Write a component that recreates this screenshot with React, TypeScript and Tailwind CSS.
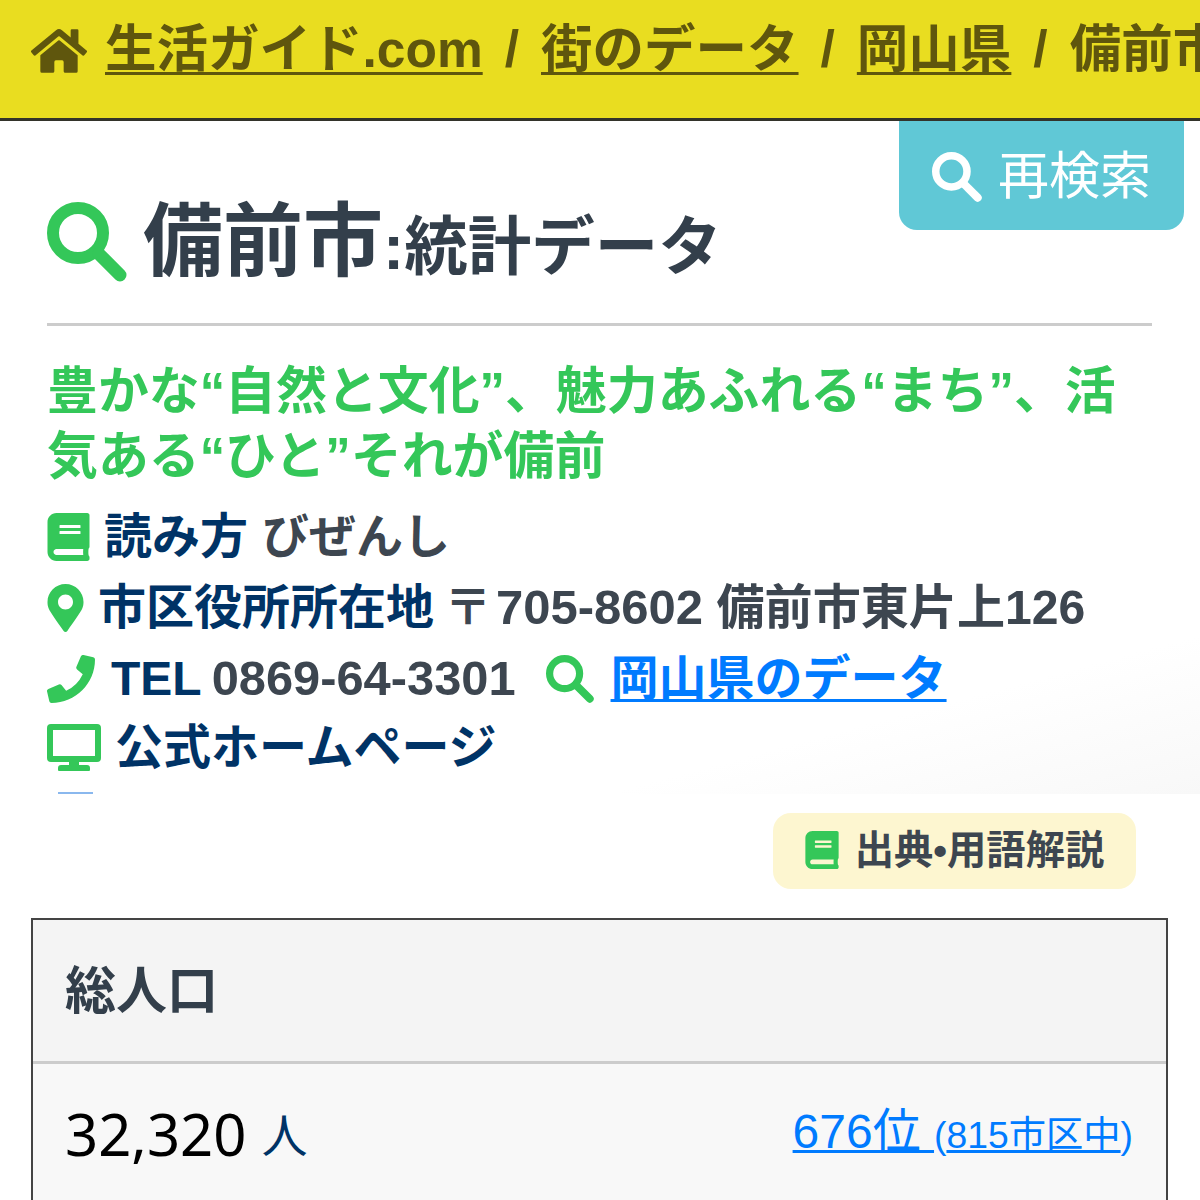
import React from "react";
import { FaHome, FaBook, FaMapMarkerAlt, FaPhoneAlt } from "react-icons/fa";

const Search = ({ className }: { className: string }) => (
  <svg viewBox="0 0 80 80" className={className} fill="none">
    <circle cx="31" cy="31" r="25" stroke="currentColor" strokeWidth="12" />
    <path d="M52 52 L73 73" stroke="currentColor" strokeWidth="13" strokeLinecap="round" />
  </svg>
);

const Desktop = ({ className }: { className: string }) => (
  <svg viewBox="0 0 54 48" className={className} fill="currentColor">
    <path fillRule="evenodd" d="M4 0h46a4 4 0 0 1 4 4v30a4 4 0 0 1-4 4H4a4 4 0 0 1-4-4V4a4 4 0 0 1 4-4zM6 6v26h42V6z" />
    <path d="M22 37h10v5h-10zM14 41h26a3 3 0 0 1 3 3v2a1 1 0 0 1-1 1H12a1 1 0 0 1-1-1v-2a3 3 0 0 1 3-3z" />
  </svg>
);

const Sep = () => <span className="mx-[22px] font-bold">/</span>;

export default function App() {
  return (
    <div className="h-[1200px] w-[1200px] overflow-hidden bg-white font-['Liberation_Sans','Noto_Sans_CJK_JP',sans-serif]">
      <header className="flex h-[121px] items-start overflow-hidden whitespace-nowrap border-b-[3px] border-[#33332a] bg-[#e9dd20] pl-[31px] pt-[19px] text-[51.5px] font-bold leading-[60px] text-[#5f560d]">
        <FaHome className="mr-[18px] mt-[7px] h-[50px] w-[56px] shrink-0" />
        <span className="underline decoration-[3px] underline-offset-[5px]">生活ガイド.com</span>
        <Sep />
        <span className="underline decoration-[3px] underline-offset-[5px]">街のデータ</span>
        <Sep />
        <span className="underline decoration-[3px] underline-offset-[5px]">岡山県</span>
        <Sep />
        <span>備前市</span>
      </header>

      <section className="h-[673px] overflow-hidden bg-[linear-gradient(165deg,#ffffff_84%,#f8f8f8_100%)] pl-[47px] pr-[48px]">
        <div className="float-right mr-[-32px] flex h-[109px] w-[285px] items-center justify-center gap-[16px] rounded-b-[18px] bg-[#60c8d6] pt-[3px] text-[51px] text-white">
          <Search className="h-[50px] w-[50px]" />
          <span>再検索</span>
        </div>
        <div className="border-b-[3px] border-[#cccccc] pb-[26px] pt-[71px]">
          <h1 className="flex items-baseline font-bold leading-[100px] text-[#333f4b]">
            <Search className="mb-[6px] mr-[16px] h-[80px] w-[80px] shrink-0 self-center text-[#34c759]" />
            <span className="text-[80px]">備前市</span>
            <span className="text-[63.5px]">:統計データ</span>
          </h1>
        </div>
        <p className="mt-[33px] text-[50.9px] font-bold leading-[65px] text-[#34c759]">
          豊かな“自然と文化”、魅力あふれる“まち”、活気ある“ひと”それが備前
        </p>
        <div className="mt-[12px] text-[48px] font-bold leading-[71px] text-[#3d4650]">
          <div className="flex h-[71px] items-center whitespace-nowrap">
            <FaBook className="mr-[14px] h-[48px] w-[43px] shrink-0 text-[#34c759]" />
            <span className="text-[#003366]">読み方</span>
            <span className="ml-[14px] text-[47px]">びぜんし</span>
          </div>
          <div className="flex h-[71px] items-center whitespace-nowrap">
            <FaMapMarkerAlt className="mr-[14px] h-[48px] w-[37px] shrink-0 text-[#34c759]" />
            <span className="text-[#003366]">市区役所所在地</span>
            <span className="ml-[10px]">
              〒<span className="ml-[4px] text-[49px]">705-8602</span> <span className="text-[48.1px]">備前市東片上126</span>
            </span>
          </div>
          <div className="flex h-[71px] items-center whitespace-nowrap">
            <FaPhoneAlt className="mr-[16px] h-[48px] w-[48px] shrink-0 -scale-x-100 text-[#34c759]" />
            <span className="text-[#003366]">TEL</span>
            <span className="ml-[10px] text-[48.8px]">0869-64-3301</span>
            <Search className="ml-[30px] mr-[17px] h-[48px] w-[48px] shrink-0 text-[#34c759]" />
            <span className="text-[#007bff] underline decoration-[3px] underline-offset-[4px]">岡山県のデータ</span>
          </div>
          <div className="flex h-[67px] items-center whitespace-nowrap">
            <Desktop className="mr-[14px] h-[48px] w-[54px] shrink-0 text-[#34c759]" />
            <span className="text-[#003366]">公式ホームページ</span>
          </div>
          <div className="ml-[11px] mt-[11px] h-[4px] w-[35px] bg-[#8ab8ee]" />
        </div>
      </section>

      <div className="flex justify-end pr-[64px] pt-[19px]">
        <div className="flex h-[76px] w-[363px] items-center justify-center gap-[16px] rounded-[18px] bg-[#fdf6d0] pb-[2px] text-[39.3px] font-bold text-[#3d4650]">
          <FaBook className="h-[38px] w-[34px] shrink-0 text-[#34c759]" />
          <span>出典•用語解説</span>
        </div>
      </div>

      <div className="ml-[31px] mr-[32px] mt-[29px] border-2 border-[#444444]">
        <div className="flex h-[144px] items-center border-b-[3px] border-[#cccccc] bg-[#f4f4f4] px-[32px] pt-[3px] text-[51px] font-bold text-[#333f4b]">
          総人口
        </div>
        <div className="flex h-[160px] items-start justify-between bg-[#f8f8f8] pl-[32px] pr-[33px] pt-[33px]">
          <div className="font-['Noto_Sans','Noto_Sans_CJK_JP',sans-serif] text-[58px] leading-[74px] text-black">
            32,320 <span className="align-[4px] text-[46px] text-[#003366]">人</span>
          </div>
          <div className="text-[#007bff]">
            <span className="text-[48px] leading-[70px] underline decoration-[3px]">676位 </span>
            <span className="text-[37.3px]">
              (<span className="underline decoration-[3px]">815市区中</span>)
            </span>
          </div>
        </div>
      </div>
    </div>
  );
}
